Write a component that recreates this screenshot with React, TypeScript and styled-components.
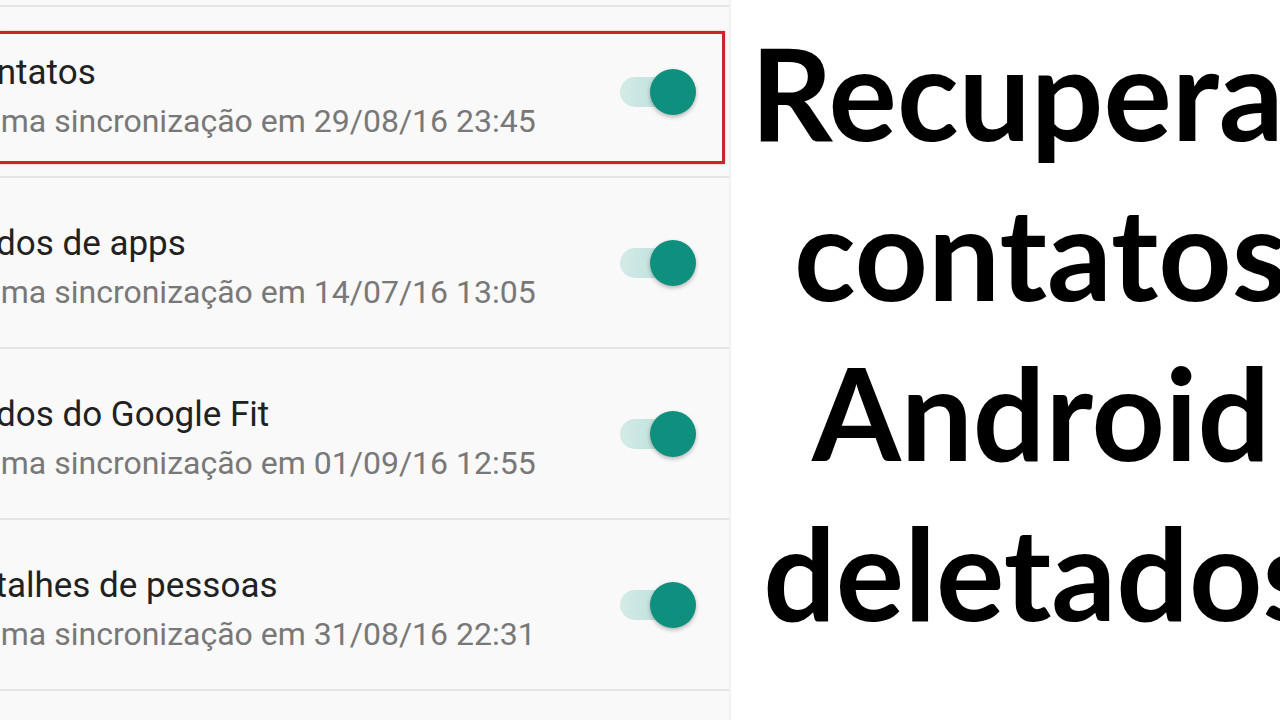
import React from 'react';
import styled, { createGlobalStyle } from 'styled-components';

const GlobalStyle = createGlobalStyle`
  html, body {
    margin: 0;
    padding: 0;
    background: #ffffff;
    overflow: hidden;
  }
`;

const Page = styled.div`
  width: 1280px;
  height: 720px;
  display: flex;
  overflow: hidden;
  background: #ffffff;
`;

const Phone = styled.div`
  flex: 0 0 731px;
  height: 720px;
  overflow: hidden;
  background: #f9f9f9;
  padding-top: 5px;
  box-sizing: border-box;
  border-right: 2px solid #f1f1f1;
`;

const Row = styled.div`
  height: 171px;
  box-sizing: border-box;
  border-top: 2px solid #e4e4e4;
  padding: 24px 4px 12px 0;
  display: flex;
`;

const RowBox = styled.div<{ $highlight?: boolean }>`
  flex: 1;
  display: flex;
  align-items: center;
  justify-content: space-between;
  border: 3px solid ${p => (p.$highlight ? '#c62828' : 'transparent')};
  border-left: none;
  box-shadow: ${p => (p.$highlight ? '0 0 2px rgba(198, 40, 40, 0.35)' : 'none')};
`;

// the screenshot is cropped on the left, so the labels start off-screen
const TextCol = styled.div`
  margin-left: -46px;
  padding-bottom: 4px;
  display: flex;
  flex-direction: column;
  font-family: Roboto, 'Noto Sans', sans-serif;
  white-space: nowrap;
`;

const Title = styled.div`
  font-size: 35px;
  line-height: 40px;
  color: #212121;
`;

const Subtitle = styled.div`
  margin-top: 10px;
  font-size: 32px;
  line-height: 36px;
  color: #787878;
`;

const Switch = styled.div`
  position: relative;
  width: 76px;
  height: 46px;
  margin-right: 26px;
  margin-bottom: 12px;
  flex-shrink: 0;
`;

const Track = styled.div`
  position: absolute;
  left: 0;
  top: 8px;
  width: 62px;
  height: 30px;
  border-radius: 15px;
  background: linear-gradient(90deg, #d3ebe7, #b6ddd7);
`;

const Thumb = styled.div`
  position: absolute;
  right: 0;
  top: 0;
  width: 46px;
  height: 46px;
  border-radius: 50%;
  background: #0f8f7e;
  box-shadow: 0 2px 4px rgba(0, 0, 0, 0.28);
`;

const Headline = styled.div`
  flex: 0 0 620px;
  padding-top: 12px;
  text-align: center;
  font-family: Lato, 'Open Sans', sans-serif;
  font-weight: 700;
  font-size: 128px;
  line-height: 160px;
  color: #000000;
  white-space: nowrap;
`;

const accounts = [
  { title: 'Contatos', date: '29/08/16 23:45', highlight: true },
  { title: 'Dados de apps', date: '14/07/16 13:05' },
  { title: 'Dados do Google Fit', date: '01/09/16 12:55' },
  { title: 'Detalhes de pessoas', date: '31/08/16 22:31' },
  { title: 'Drive', date: '01/09/16 13:10' },
];

export default function App() {
  return (
    <>
      <GlobalStyle />
      <Page>
        <Phone>
          {accounts.map(a => (
            <Row key={a.title}>
              <RowBox $highlight={a.highlight}>
                <TextCol>
                  <Title>{a.title}</Title>
                  <Subtitle>Última sincronização em {a.date}</Subtitle>
                </TextCol>
                <Switch>
                  <Track />
                  <Thumb />
                </Switch>
              </RowBox>
            </Row>
          ))}
        </Phone>
        <Headline>
          Recuperar
          <br />
          contatos
          <br />
          Android
          <br />
          deletados
        </Headline>
      </Page>
    </>
  );
}
